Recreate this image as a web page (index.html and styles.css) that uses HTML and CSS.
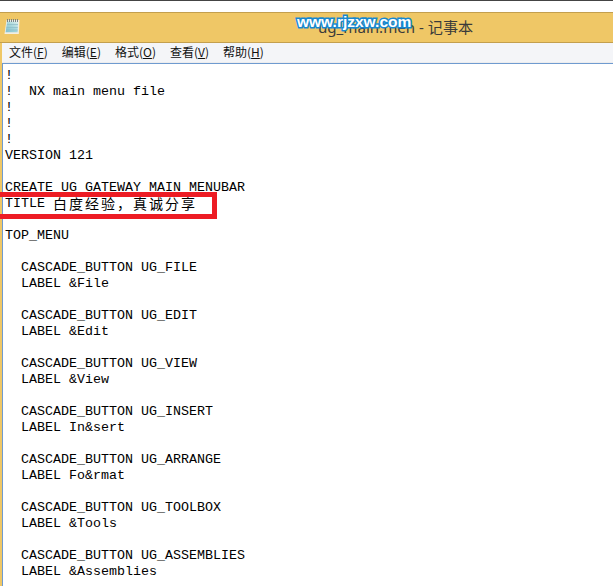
FILE: index.html
```html
<!DOCTYPE html>
<html lang="zh">
<head>
<meta charset="utf-8">
<title>ug_main.men - 记事本</title>
<link rel="stylesheet" href="styles.css">
</head>
<body>
<div class="desktop-strip"></div>
<div class="window">
  <header class="titlebar">
    <svg class="app-icon" width="16" height="17" viewBox="0 0 16 17">
      <defs>
        <linearGradient id="pad" x1="0" y1="1" x2="1" y2="0">
          <stop offset="0" stop-color="#7fc0cf"/>
          <stop offset="0.55" stop-color="#a9d8dc"/>
          <stop offset="1" stop-color="#dff0ee"/>
        </linearGradient>
      </defs>
      <path d="M2.5 2H15.5L14.8 16H0.5Z" fill="#f2efe4"/>
      <path d="M3 3.5H14.2L13.6 14.2H1.6Z" fill="url(#pad)"/>
      <path d="M3 6.5H14M2.6 9.5H13.8M2.2 12H13.7" stroke="#8bbcc8" stroke-width="0.7"/>
      <path d="M3.5 1v3M5.5 1v3M7.5 1v3M9.5 1v3M11.5 1v3M13.5 1v3" stroke="#6d7a80" stroke-width="0.9"/>
    </svg>
    <span class="title">ug_main.men - 记事本</span>
  </header>
  <div class="client">
    <nav class="menubar">
      <span class="menu-item">文件(<u>F</u>)</span>
      <span class="menu-item">编辑(<u>E</u>)</span>
      <span class="menu-item">格式(<u>O</u>)</span>
      <span class="menu-item">查看(<u>V</u>)</span>
      <span class="menu-item">帮助(<u>H</u>)</span>
    </nav>
    <pre class="editor">!
!  NX main menu file
!
!
!
VERSION 121

CREATE_UG_GATEWAY_MAIN_MENUBAR
TITLE <span class="cjk">白度经验，真诚分享</span>

TOP_MENU

  CASCADE_BUTTON UG_FILE
  LABEL &amp;File

  CASCADE_BUTTON UG_EDIT
  LABEL &amp;Edit

  CASCADE_BUTTON UG_VIEW
  LABEL &amp;View

  CASCADE_BUTTON UG_INSERT
  LABEL In&amp;sert

  CASCADE_BUTTON UG_ARRANGE
  LABEL Fo&amp;rmat

  CASCADE_BUTTON UG_TOOLBOX
  LABEL &amp;Tools

  CASCADE_BUTTON UG_ASSEMBLIES
  LABEL &amp;Assemblies</pre>
  </div>
</div>
<div class="highlight"></div>
<div class="watermark">www.rjzxw.com</div>
</body>
</html>
```
FILE: styles.css
```css
html, body {
  margin: 0;
  padding: 0;
  height: 100%;
  overflow: hidden;
  background: #fff;
}
body {
  position: relative;
  width: 613px;
  height: 586px;
}
.desktop-strip {
  height: 12px;
  box-sizing: border-box;
  border-top: 1px solid #444;
  background: #fff;
}
.window {
  border-top: 1px solid #c39f4e;
  background: #efc766;
  height: 574px;
  box-sizing: border-box;
  display: flex;
  flex-direction: column;
}
.titlebar {
  height: 29px;
  flex: none;
  position: relative;
  display: flex;
  align-items: center;
  padding-left: 318px;
  border-bottom: 1px solid #c39f4e;
  box-sizing: content-box;
}
.app-icon {
  position: absolute;
  left: 4px;
  top: 5px;
}
.title {
  font: 15.1px/29px "Noto Sans", "Noto Sans CJK SC", sans-serif;
  color: #3a3a3a;
}
.client {
  flex: 1;
  margin-left: 2px;
  display: flex;
  flex-direction: column;
  min-height: 0;
}
.menubar {
  height: 19px;
  flex: none;
  background: #f4f5f8;
  display: flex;
  align-items: flex-start;
  gap: 14px;
  padding-left: 7px;
  border-bottom: 1px solid #ededee;
  font: 12px/18px "Noto Sans CJK SC", "Liberation Sans", sans-serif;
  color: #111;
}
.editor {
  flex: 1;
  margin: 0;
  background: #fff;
  border-top: 1px solid #6f9bd0;
  border-left: 1px solid #6f9bd0;
  padding: 4px 0 0 2px;
  font: 13.33px/16px "Liberation Mono", monospace;
  color: #000;
  overflow: hidden;
}
.cjk {
  font-family: "Noto Sans CJK SC", sans-serif;
  font-size: 14px;
  letter-spacing: 2px;
  line-height: 0;
  vertical-align: -2px;
}
.highlight {
  position: absolute;
  left: -5px;
  top: 192px;
  width: 222px;
  height: 27px;
  box-sizing: border-box;
  border: 5px solid #ed1c24;
}
.watermark {
  position: absolute;
  left: 297px;
  top: 13px;
  font: bold 15.5px/18px "Liberation Sans", sans-serif;
  color: #fff;
  -webkit-text-stroke: 3px #1788cf;
  paint-order: stroke fill;
}
```
